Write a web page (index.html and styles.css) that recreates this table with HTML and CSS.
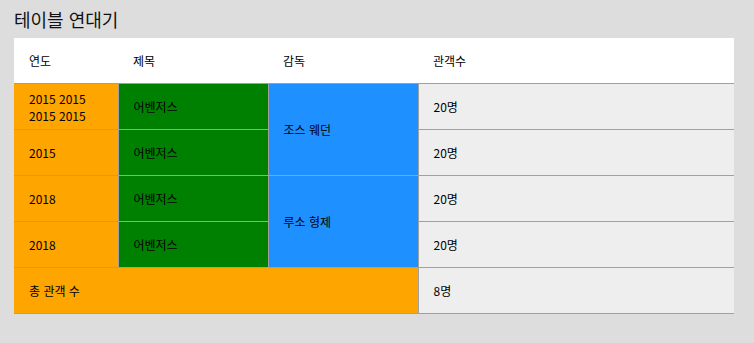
FILE: index.html
```html
<!DOCTYPE html>
<html lang="ko">
<head>
<meta charset="utf-8">
<title>테이블 연대기</title>
<link rel="stylesheet" href="styles.css">
</head>
<body>
<h1 class="title">테이블 연대기</h1>
<table class="chron">
  <colgroup>
    <col class="c-year">
    <col class="c-title">
    <col class="c-dir">
    <col>
  </colgroup>
  <thead>
    <tr><th>연도</th><th>제목</th><th>감독</th><th>관객수</th></tr>
  </thead>
  <tbody>
    <tr>
      <td class="year">2015 2015 2015 2015</td>
      <td class="movie">어벤저스</td>
      <td class="dir" rowspan="2">조스 웨던</td>
      <td class="aud">20명</td>
    </tr>
    <tr>
      <td class="year">2015</td>
      <td class="movie">어벤저스</td>
      <td class="aud">20명</td>
    </tr>
    <tr>
      <td class="year">2018</td>
      <td class="movie">어벤저스</td>
      <td class="dir" rowspan="2">루소 형제</td>
      <td class="aud">20명</td>
    </tr>
    <tr>
      <td class="year">2018</td>
      <td class="movie">어벤저스</td>
      <td class="aud">20명</td>
    </tr>
    <tr>
      <td class="year" colspan="3">총 관객 수</td>
      <td class="aud">8명</td>
    </tr>
  </tbody>
</table>
</body>
</html>
```
FILE: styles.css
```css
html, body {
  margin: 0;
  background: #dddddd;
}
body {
  padding: 7px 14px 0 14px;
  font-family: "Malgun Gothic", "Noto Sans CJK KR", "Noto Sans", sans-serif;
  color: #000;
}
.title {
  margin: 0 0 6px 0;
  font-size: 18px;
  font-weight: normal;
  line-height: 25px;
  color: #111;
}
.chron {
  width: 720px;
  border-collapse: collapse;
  table-layout: fixed;
  font-size: 12px;
  line-height: 17px;
}
.c-year { width: 104px; }
.c-title { width: 150px; }
.c-dir { width: 150px; }
.chron th {
  background: #ffffff;
  font-weight: normal;
  text-align: left;
  height: 45px;
  padding: 0 15px;
  border-bottom: 1px solid #a0a0a0;
}
.chron td {
  height: 45px;
  padding: 0 15px;
  vertical-align: middle;
  border-bottom: 1px solid #a0a0a0;
  border-left: 1px solid #a0a0a0;
}
.chron td.year { border-left: none; background: #ffa500; }
.chron td.movie { background: #008000; }
.chron td.dir { background: #1e90ff; }
.chron td.aud { background: #eeeeee; }
```
